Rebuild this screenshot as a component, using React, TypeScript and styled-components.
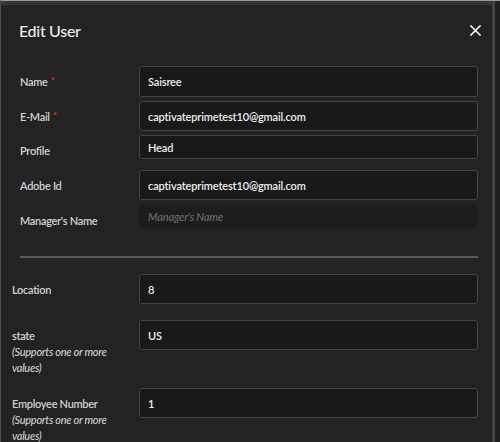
import styled, { createGlobalStyle } from "styled-components";

const GlobalStyle = createGlobalStyle`
  html, body {
    margin: 0;
    padding: 0;
    background: #232323;
  }
  body {
    font-family: Lato, "Open Sans", sans-serif;
    -webkit-font-smoothing: antialiased;
  }
`;

type Field = {
  label: string;
  value?: string;
  placeholder?: string;
  required?: boolean;
  hint?: boolean;
  height: number;
  top: number;
  disabled?: boolean;
};

const USER_FIELDS: Field[] = [
  { label: "Name", value: "Saisree", required: true, height: 31, top: 0 },
  { label: "E-Mail", value: "captivateprimetest10@gmail.com", required: true, height: 30, top: 4 },
  { label: "Profile", value: "Head", height: 24, top: 4 },
  { label: "Adobe Id", value: "captivateprimetest10@gmail.com", height: 30, top: 11 },
  { label: "Manager's Name", placeholder: "Manager's Name", height: 23, top: 5, disabled: true },
];

const EXTRA_FIELDS: Field[] = [
  { label: "Location", value: "8", height: 30, top: 0 },
  { label: "state", value: "US", hint: true, height: 30, top: 16 },
  { label: "Employee Number", value: "1", hint: true, height: 30, top: 12 },
];

export default function App() {
  return (
    <>
      <GlobalStyle />
      <Screen>
        <Modal>
          <Header>
            <Title>Edit User</Title>
            <CloseButton aria-label="Close">
              <svg width="11" height="11" viewBox="0 0 11 11">
                <path d="M1 1 L10 10 M10 1 L1 10" stroke="#f2f2f2" strokeWidth="1.6" strokeLinecap="square" />
              </svg>
            </CloseButton>
          </Header>
          <Body>
            <Section $indent={19}>
              {USER_FIELDS.map((f) => (
                <FieldRow key={f.label} field={f} labelWidth={119} />
              ))}
            </Section>
            <Divider />
            <Section $indent={11}>
              {EXTRA_FIELDS.map((f) => (
                <FieldRow key={f.label} field={f} labelWidth={127} />
              ))}
            </Section>
          </Body>
        </Modal>
        <Scrollbar />
      </Screen>
    </>
  );
}

const FieldRow = ({ field, labelWidth }: { field: Field; labelWidth: number }) => (
  <Row $top={field.top}>
    <Label $width={labelWidth}>
      {field.label}
      {field.required && <Required>*</Required>}
      {field.hint && (
        <Hint>
          (Supports one or more
          <br />
          values)
        </Hint>
      )}
    </Label>
    <Input
      $height={field.height}
      $disabled={field.disabled}
      defaultValue={field.value}
      placeholder={field.placeholder}
      readOnly
    />
  </Row>
);

const Screen = styled.div`
  display: flex;
  width: 500px;
  height: 442px;
  overflow: hidden;
  box-sizing: border-box;
  border-top: 1px solid #9a9a9a;
  border-left: 1px solid #4a4a4a;
  background: #232323;
`;

const Modal = styled.div`
  flex: 1;
  border-top: 4px solid #363636;
  border-right: 1px solid #3c3c3c;
  background: #232323;
`;

const Scrollbar = styled.div`
  width: 5px;
  border-left: 2px solid #454545;
  background: #1f1f1f;
`;

const Header = styled.div`
  height: 50px;
  display: flex;
  align-items: center;
  justify-content: space-between;
  padding: 0 11px 0 18px;
`;

const Title = styled.h2`
  margin: 0;
  font-size: 16px;
  letter-spacing: -0.3px;
  font-weight: 500;
  color: #ececec;
`;

const CloseButton = styled.button`
  border: 0;
  background: none;
  padding: 0;
  width: 11px;
  height: 11px;
  display: flex;
  cursor: pointer;
`;

const Body = styled.div`
  padding: 11px 14px 0 0;
`;

const Section = styled.div<{ $indent: number }>`
  padding-left: ${(p) => p.$indent}px;
`;

const Row = styled.div<{ $top: number }>`
  display: flex;
  align-items: flex-start;
  margin-top: ${(p) => p.$top}px;
`;

const Label = styled.div<{ $width: number }>`
  width: ${(p) => p.$width}px;
  flex-shrink: 0;
  padding-top: 8px;
  font-size: 11px;
  letter-spacing: -0.3px;
  line-height: 16px;
  font-weight: 600;
  color: #d2d2d2;
`;

const Required = styled.span`
  color: #e0342e;
  font-size: 10px;
  vertical-align: top;
  margin-left: 3px;
  line-height: 12px;
`;

const Hint = styled.div`
  font-style: italic;
  font-weight: 500;
  color: #cfcfcf;
`;

const Input = styled.input<{ $height: number; $disabled?: boolean }>`
  flex: 1;
  min-width: 0;
  box-sizing: border-box;
  height: ${(p) => p.$height}px;
  padding: 0 8px;
  border: 1px solid ${(p) => (p.$disabled ? "#1d1d1d" : "#464646")};
  border-radius: 3px;
  background: ${(p) => (p.$disabled ? "#1d1d1d" : "#191919")};
  color: #ececec;
  font-family: inherit;
  font-size: 11px;
  letter-spacing: -0.15px;
  font-weight: 600;
  outline: none;

  &::placeholder {
    color: #6c6c6c;
    font-style: italic;
    font-weight: 500;
  }
`;

const Divider = styled.hr`
  margin: 27px 0 16px 19px;
  border: 0;
  height: 2px;
  background: #5a5a5a;
`;
